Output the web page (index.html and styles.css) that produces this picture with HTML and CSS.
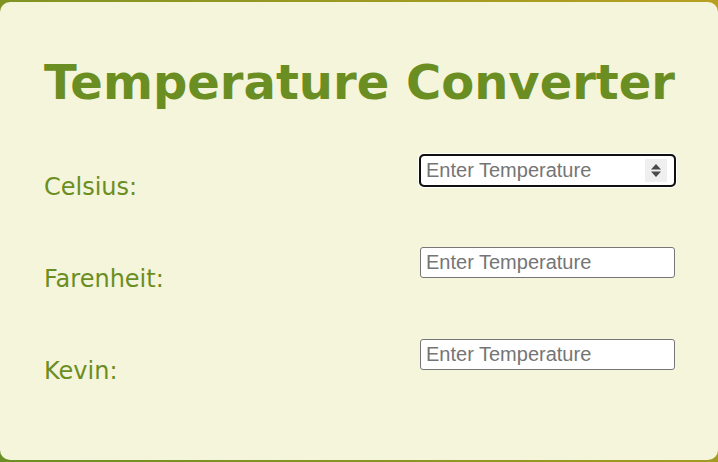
FILE: index.html
```html
<!DOCTYPE html>
<html lang="en">
<head>
<meta charset="utf-8">
<title>Temperature Converter</title>
<link rel="stylesheet" href="styles.css">
</head>
<body>
<main class="card">
  <h1 class="title">Temperature Converter</h1>
  <div class="row">
    <label class="label" for="c">Celsius:</label>
    <div class="field-wrap">
      <input class="field" id="c" type="number" placeholder="Enter Temperature" autofocus>
      <span class="spinner" aria-hidden="true">
        <svg width="22" height="23" viewBox="0 0 22 23">
          <path d="M11 5 L16 10.5 L6 10.5 Z" fill="#4a4a4a"/>
          <path d="M11 18 L16 12.5 L6 12.5 Z" fill="#4a4a4a"/>
        </svg>
      </span>
    </div>
  </div>
  <div class="row">
    <label class="label" for="f">Farenheit:</label>
    <div class="field-wrap">
      <input class="field" id="f" type="number" placeholder="Enter Temperature">
    </div>
  </div>
  <div class="row">
    <label class="label" for="k">Kevin:</label>
    <div class="field-wrap">
      <input class="field" id="k" type="number" placeholder="Enter Temperature">
    </div>
  </div>
</main>
</body>
</html>
```
FILE: styles.css
```css
html, body {
  margin: 0;
  height: 100%;
}
body {
  background: linear-gradient(60deg, #6b8e23, #b8a020);
  padding: 2px 0;
  box-sizing: border-box;
  font-family: "DejaVu Sans", Verdana, sans-serif;
}
.card {
  background: #f5f5dc;
  border-radius: 10px;
  height: 100%;
  box-sizing: border-box;
  padding: 20px 43px 20px 44px;
}
.title {
  margin: 32px 0;
  font-size: 48px;
  font-weight: bold;
  line-height: 56px;
  color: #6b8e23;
  white-space: nowrap;
}
.row {
  display: flex;
  justify-content: space-between;
  align-items: flex-start;
  height: 92px;
}
.label {
  margin-top: 31px;
  font-size: 24px;
  line-height: 28px;
  color: #6b8e23;
}
.field-wrap {
  position: relative;
  margin-top: 13px;
  width: 255px;
  height: 31px;
}
.field {
  display: block;
  width: 100%;
  height: 100%;
  box-sizing: border-box;
  padding: 3px 5px;
  border: 1px solid #767676;
  border-radius: 3px;
  background: #fff;
  font-family: "Liberation Sans", Arial, sans-serif;
  font-size: 20px;
  -moz-appearance: textfield;
}
.field::-webkit-inner-spin-button,
.field::-webkit-outer-spin-button {
  -webkit-appearance: none;
  margin: 0;
}
.field::placeholder {
  color: #757575;
}
.field:focus {
  outline: 2px solid #101010;
  outline-offset: -1px;
  border-radius: 4px;
  box-shadow: 0 0 0 2px #fff;
}
.spinner {
  position: absolute;
  top: 4px;
  right: 8px;
  width: 22px;
  height: 23px;
  background: #efefef;
  display: flex;
  pointer-events: none;
}
```
